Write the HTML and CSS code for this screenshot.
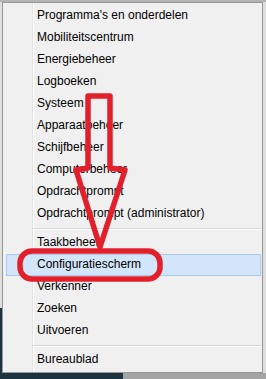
FILE: index.html
```html
<!DOCTYPE html>
<html lang="nl">
<head>
  <meta charset="UTF-8" />
  <title>Snelkoppelingsmenu</title>
  <link rel="stylesheet" href="styles.css">
</head>
<body>

  <div class="menu">
    <div class="item">Programma's en onderdelen</div>
    <div class="item">Mobiliteitscentrum</div>
    <div class="item">Energiebeheer</div>
    <div class="item">Logboeken</div>
    <div class="item">Systeem</div>
    <div class="item">Apparaatbeheer</div>
    <div class="item">Schijfbeheer</div>
    <div class="item">Computerbeheer</div>
    <div class="item">Opdrachtprompt</div>
    <div class="item">Opdrachtprompt (administrator)</div>
    <div class="separator"></div>
    <div class="item">Taakbeheer</div>
    <div class="item active">Configuratiescherm</div>
    <div class="item">Verkenner</div>
    <div class="item">Zoeken</div>
    <div class="item">Uitvoeren</div>
    <div class="separator"></div>
    <div class="item">Bureaublad</div>
  </div>

  <!-- red markings drawn over the screenshot -->
  <svg class="marks" width="266" height="379" viewBox="0 0 266 379">
    <path d="M88 168 L88 96 L110 96 L110 168 L125 170 L100 247 L76 170 Z"
          fill="none" stroke="#e2202c" stroke-width="5.5" stroke-linejoin="round" />
    <rect x="20" y="251" width="140" height="28" rx="12" ry="12"
          fill="none" stroke="#e2202c" stroke-width="5.5" />
  </svg>

</body>
</html>
```

FILE: styles.css
```css
body {
  margin: 0;
  width: 266px;
  height: 379px;
  overflow: hidden;
  position: relative;
  font-family: "Liberation Sans", Arial, sans-serif;
  background:
    linear-gradient(#b4b4b4, #b4b4b4) 0 0 / 266px 2px no-repeat,
    linear-gradient(#1b3440, #1b3440) 0 308px / 123px 71px no-repeat,
    linear-gradient(#a4a4a4, #a4a4a4) 123px 373px / 143px 6px no-repeat,
    #dedede;
}

.menu {
  margin: 2px 0 0 2px;
  width: 255px;
  padding: 2px 1px 1px 3px;
  border: 1px solid #979797;
  background:
    linear-gradient(to right,
      transparent 29px, #e2e3e3 29px, #e2e3e3 30px,
      #ffffff 30px, #ffffff 31px, transparent 31px),
    #f0f0f0;
}

.item {
  height: 22px;
  line-height: 21px;
  padding-left: 31px;
  font-size: 12px;
  color: #000;
  box-sizing: border-box;
}

.item.active {
  background: #d3e5f8;
  border: 1px solid #a9caf0;
  padding-left: 30px;
  line-height: 19px;
}

.separator {
  height: 7px;
  margin-left: 27px;
  box-sizing: border-box;
  padding-top: 3px;
}

.separator::before {
  content: "";
  display: block;
  height: 1px;
  background: #d7d7d7;
  border-bottom: 1px solid #ffffff;
}

.marks {
  position: absolute;
  left: 0;
  top: 0;
  pointer-events: none;
}
```
